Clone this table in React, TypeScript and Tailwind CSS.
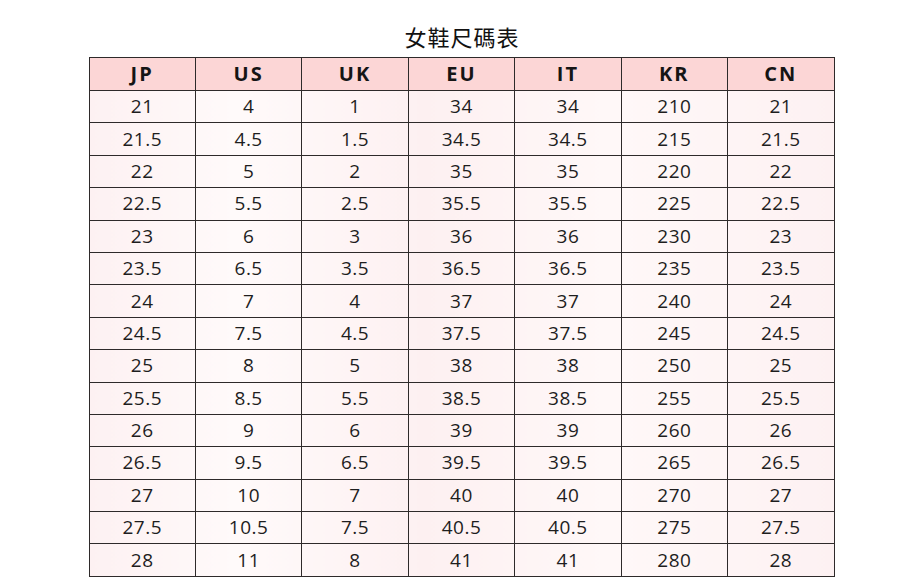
const headers = ["JP", "US", "UK", "EU", "IT", "KR", "CN"];

const rows: string[][] = [
  ["21", "4", "1", "34", "34", "210", "21"],
  ["21.5", "4.5", "1.5", "34.5", "34.5", "215", "21.5"],
  ["22", "5", "2", "35", "35", "220", "22"],
  ["22.5", "5.5", "2.5", "35.5", "35.5", "225", "22.5"],
  ["23", "6", "3", "36", "36", "230", "23"],
  ["23.5", "6.5", "3.5", "36.5", "36.5", "235", "23.5"],
  ["24", "7", "4", "37", "37", "240", "24"],
  ["24.5", "7.5", "4.5", "37.5", "37.5", "245", "24.5"],
  ["25", "8", "5", "38", "38", "250", "25"],
  ["25.5", "8.5", "5.5", "38.5", "38.5", "255", "25.5"],
  ["26", "9", "6", "39", "39", "260", "26"],
  ["26.5", "9.5", "6.5", "39.5", "39.5", "265", "26.5"],
  ["27", "10", "7", "40", "40", "270", "27"],
  ["27.5", "10.5", "7.5", "40.5", "40.5", "275", "27.5"],
  ["28", "11", "8", "41", "41", "280", "28"],
];

export default function App() {
  return (
    <div className="w-[920px] h-[582px] overflow-hidden bg-white flex flex-col items-center">
      {/* title */}
      <h1
        className="mt-[21px] h-[36px] ml-[4px] text-[22px] leading-[30px] text-[#111] tracking-[1px]"
        style={{ fontFamily: '"Noto Sans CJK TC", "Noto Sans", sans-serif' }}
      >
        女鞋尺碼表
      </h1>

      <table
        className="ml-[3px] w-[746px] border-collapse table-fixed text-[#1e1e1e] bg-[linear-gradient(90deg,#fdf1f2_0%,#fffafa_20%,#fdf0f1_45%,#fff8f8_70%,#fdf1f2_100%)]"
        style={{ fontFamily: '"Open Sans", "Noto Sans", sans-serif' }}
      >
        <thead>
          <tr className="h-[33px] bg-[#fcd6d6]">
            {headers.map((h) => (
              <th
                key={h}
                className="border-[1.5px] border-[#2e2a2a] text-[20px] font-bold tracking-[2px] leading-none p-0 text-center text-[#151515]"
              >
                {h}
              </th>
            ))}
          </tr>
        </thead>
        <tbody>
          {rows.map((r, i) => (
            <tr key={i} className="h-[32.4px]">
              {r.map((c, j) => (
                <td
                  key={j}
                  className="border-[1.5px] border-[#2e2a2a] text-[19px] leading-none p-0 text-center tracking-[0.5px]"
                >
                  {c}
                </td>
              ))}
            </tr>
          ))}
        </tbody>
      </table>
    </div>
  );
}
